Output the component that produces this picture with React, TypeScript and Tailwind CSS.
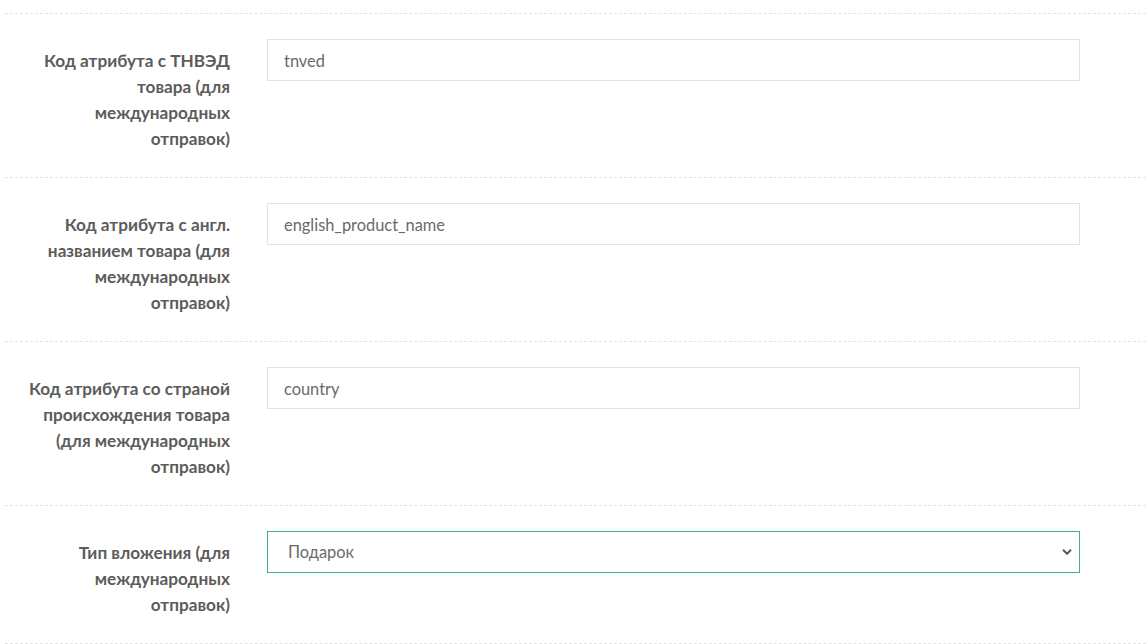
import { ChevronDown } from 'lucide-react';

interface FieldRowProps {
    label: string[];
    children: React.ReactNode;
}

function FieldRow({ label, children }: FieldRowProps) {
    return (
        <div className="flex border-t border-dashed border-[#e3e3e3] pt-[25px] pb-[25px]">
            <div className="w-[225px] shrink-0 pt-[9px] text-right text-[17.2px] leading-[26px] font-bold text-[#5c5c5c]">
                {label.map((line, i) => (
                    <div key={i} className="whitespace-nowrap">{line}</div>
                ))}
            </div>
            <div className="ml-[37px] w-[813px] shrink-0">{children}</div>
        </div>
    );
}

const inputClass =
    'block h-[42px] w-full border border-[#e2e2e2] bg-white px-4 text-[16.4px] text-[#6a6a6a] outline-none';

export default function App() {
    return (
        <div className="min-h-screen bg-white font-['Lato','Open_Sans',sans-serif]">
            <div className="h-[13px]" />
            <div className="ml-[5px]">
                <FieldRow label={['Код атрибута с ТНВЭД', 'товара (для', 'международных', 'отправок)']}>
                    <input className={inputClass} defaultValue="tnved" />
                </FieldRow>
                <FieldRow label={['Код атрибута с англ.', 'названием товара (для', 'международных', 'отправок)']}>
                    <input className={inputClass} defaultValue="english_product_name" />
                </FieldRow>
                <FieldRow label={['Код атрибута со страной', 'происхождения товара', '(для международных', 'отправок)']}>
                    <input className={inputClass} defaultValue="country" />
                </FieldRow>
                <FieldRow label={['Тип вложения (для', 'международных', 'отправок)']}>
                    <div className="relative">
                        <select
                            defaultValue="gift"
                            className="block h-[42px] w-full appearance-none border border-[#45a99c] bg-white pl-[20px] pr-10 text-[16.4px] text-[#6a6a6a] outline-none"
                        >
                            <option value="gift">Подарок</option>
                            <option value="docs">Документы</option>
                            <option value="sample">Образец</option>
                            <option value="return">Возврат товара</option>
                            <option value="other">Прочее</option>
                        </select>
                        <ChevronDown
                            className="pointer-events-none absolute right-[6px] top-1/2 h-[14px] w-[14px] -translate-y-1/2 text-[#555]"
                            strokeWidth={3.2}
                        />
                    </div>
                </FieldRow>
                <div className="border-t border-dashed border-[#e3e3e3]" />
            </div>
        </div>
    );
}
